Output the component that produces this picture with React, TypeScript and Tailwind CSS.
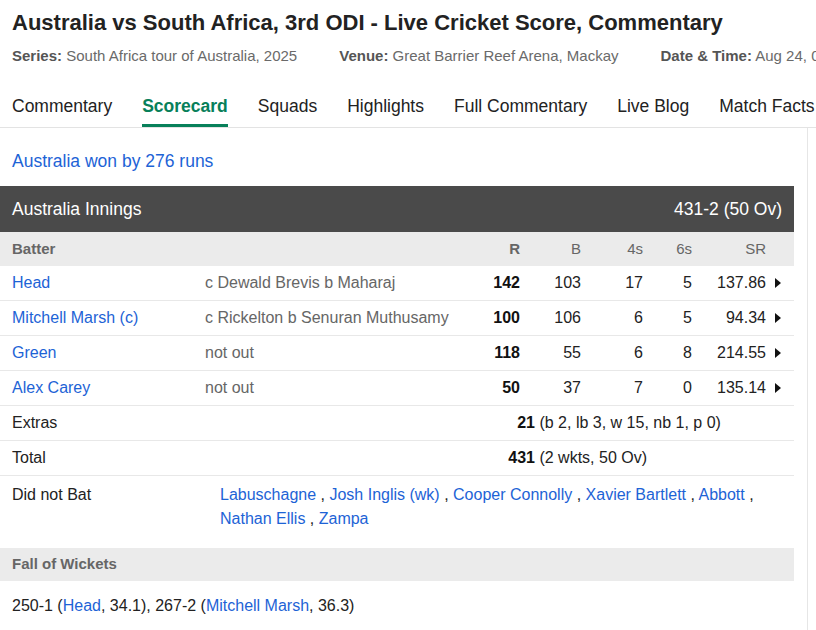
const batters = [
  { name: 'Head', how: 'c Dewald Brevis b Maharaj', r: 142, b: 103, f: 17, s: 5, sr: '137.86' },
  { name: 'Mitchell Marsh (c)', how: 'c Rickelton b Senuran Muthusamy', r: 100, b: 106, f: 6, s: 5, sr: '94.34' },
  { name: 'Green', how: 'not out', r: 118, b: 55, f: 6, s: 8, sr: '214.55' },
  { name: 'Alex Carey', how: 'not out', r: 50, b: 37, f: 7, s: 0, sr: '135.14' },
];

const tabs = ['Commentary', 'Scorecard', 'Squads', 'Highlights', 'Full Commentary', 'Live Blog', 'Match Facts', 'Photos'];

const didNotBat = ['Labuschagne', 'Josh Inglis (wk)', 'Cooper Connolly', 'Xavier Bartlett', 'Abbott', 'Nathan Ellis', 'Zampa'];

function Arrow() {
  return (
    <svg width="6" height="10" viewBox="0 0 6 10" className="inline-block">
      <path d="M0 0 L6 5 L0 10 Z" fill="#111" />
    </svg>
  );
}

export default function App() {
  return (
    <div className="h-screen w-full overflow-hidden bg-white font-['Liberation_Sans',Arial,sans-serif] text-[#222]">
      {/* Heading */}
      <h1 className="px-[12px] pt-[10px] text-[22px] leading-[26px] font-bold whitespace-nowrap text-[#222]">
        Australia vs South Africa, 3rd ODI - Live Cricket Score, Commentary
      </h1>
      <div className="mt-[10px] flex gap-[42px] px-[12px] text-[15px] leading-[20px] whitespace-nowrap">
        <span>
          <b className="text-[#555]">Series:</b> <span className="text-[#6a6a6a]">South Africa tour of Australia, 2025</span>
        </span>
        <span>
          <b className="text-[#555]">Venue:</b> <span className="text-[#6a6a6a]">Great Barrier Reef Arena, Mackay</span>
        </span>
        <span>
          <b className="text-[#555]">Date &amp; Time:</b> <span className="text-[#6a6a6a]">Aug 24, 05:00 AM LOCAL</span>
        </span>
      </div>

      {/* Tabs */}
      <nav className="mt-[19px] flex border-b border-[#e3e3e3] px-[12px] whitespace-nowrap">
        {tabs.map((t) => (
          <a
            key={t}
            href="#"
            className={
              t === 'Scorecard'
                ? 'mr-[30px] shrink-0 border-b-[3px] border-[#08805a] pt-[10px] pb-[7px] text-[17.5px] leading-[22px] font-bold text-[#08805a]'
                : 'mr-[30px] shrink-0 border-b-[3px] border-transparent pt-[10px] pb-[7px] text-[17.5px] leading-[22px] text-[#222]'
            }
          >
            {t}
          </a>
        ))}
      </nav>

      <div className="flex">
        <main className="w-[794px] shrink-0">
          <div className="px-[12px] pt-[21px] pb-[13px] text-[17.5px] leading-[24px] text-[#1d63d6]">
            Australia won by 276 runs
          </div>

          {/* Innings header */}
          <div className="flex h-[46px] items-center justify-between bg-[#4a4a4a] px-[12px] text-[17.5px] text-white">
            <span>Australia Innings</span>
            <span>431-2 (50 Ov)</span>
          </div>

          <div className="flex h-[34px] items-center bg-[#ebebeb] px-[12px] text-[15px] text-[#666]">
            <span className="w-[193px] font-bold">Batter</span>
            <span className="flex-1" />
            <span className="w-[60px] text-right font-bold">R</span>
            <span className="w-[61px] text-right">B</span>
            <span className="w-[62px] text-right">4s</span>
            <span className="w-[49px] text-right">6s</span>
            <span className="w-[74px] text-right">SR</span>
            <span className="w-[16px]" />
          </div>

          {batters.map((p) => (
            <div key={p.name} className="flex h-[35px] items-center border-b border-[#e8e8e8] px-[12px] text-[16px]">
              <a href="#" className="w-[193px] text-[#1d63d6]">{p.name}</a>
              <span className="flex-1 text-[#666]">{p.how}</span>
              <span className="w-[60px] text-right font-bold text-[#111]">{p.r}</span>
              <span className="w-[61px] text-right">{p.b}</span>
              <span className="w-[62px] text-right">{p.f}</span>
              <span className="w-[49px] text-right">{p.s}</span>
              <span className="w-[74px] text-right">{p.sr}</span>
              <span className="flex w-[16px] justify-end pr-[1px]">
                <Arrow />
              </span>
            </div>
          ))}

          <div className="flex h-[35px] items-center border-b border-[#e8e8e8] px-[12px] text-[16px]">
            <span className="w-[193px]">Extras</span>
            <span className="w-[330px] text-right font-bold text-[#111]">21</span>
            <span className="whitespace-pre"> (b 2, lb 3, w 15, nb 1, p 0)</span>
          </div>
          <div className="flex h-[35px] items-center border-b border-[#e8e8e8] px-[12px] text-[16px]">
            <span className="w-[193px]">Total</span>
            <span className="w-[330px] text-right font-bold text-[#111]">431</span>
            <span className="whitespace-pre"> (2 wkts, 50 Ov)</span>
          </div>

          <div className="flex px-[12px] pt-[7px] pb-[17px] text-[16px] leading-[24px]">
            <span className="w-[208px] shrink-0">Did not Bat</span>
            <span className="flex-1">
              {didNotBat.map((n, i) => (
                <span key={n}>
                  <a href="#" className="text-[#1d63d6]">{n}</a>
                  {i < didNotBat.length - 1 ? ' , ' : ''}
                </span>
              ))}
            </span>
          </div>

          <div className="flex h-[33px] items-center bg-[#ebebeb] px-[12px] text-[15px] font-bold text-[#666]">
            Fall of Wickets
          </div>
          <div className="px-[12px] pt-[13px] text-[16px] leading-[24px]">
            250-1 (<a href="#" className="text-[#1d63d6]">Head</a>, 34.1), 267-2 (
            <a href="#" className="text-[#1d63d6]">Mitchell Marsh</a>, 36.3)
          </div>
        </main>
        <aside className="ml-[13px] min-h-[520px] flex-1 border-l border-[#e6e6e6]" />
      </div>
    </div>
  );
}
